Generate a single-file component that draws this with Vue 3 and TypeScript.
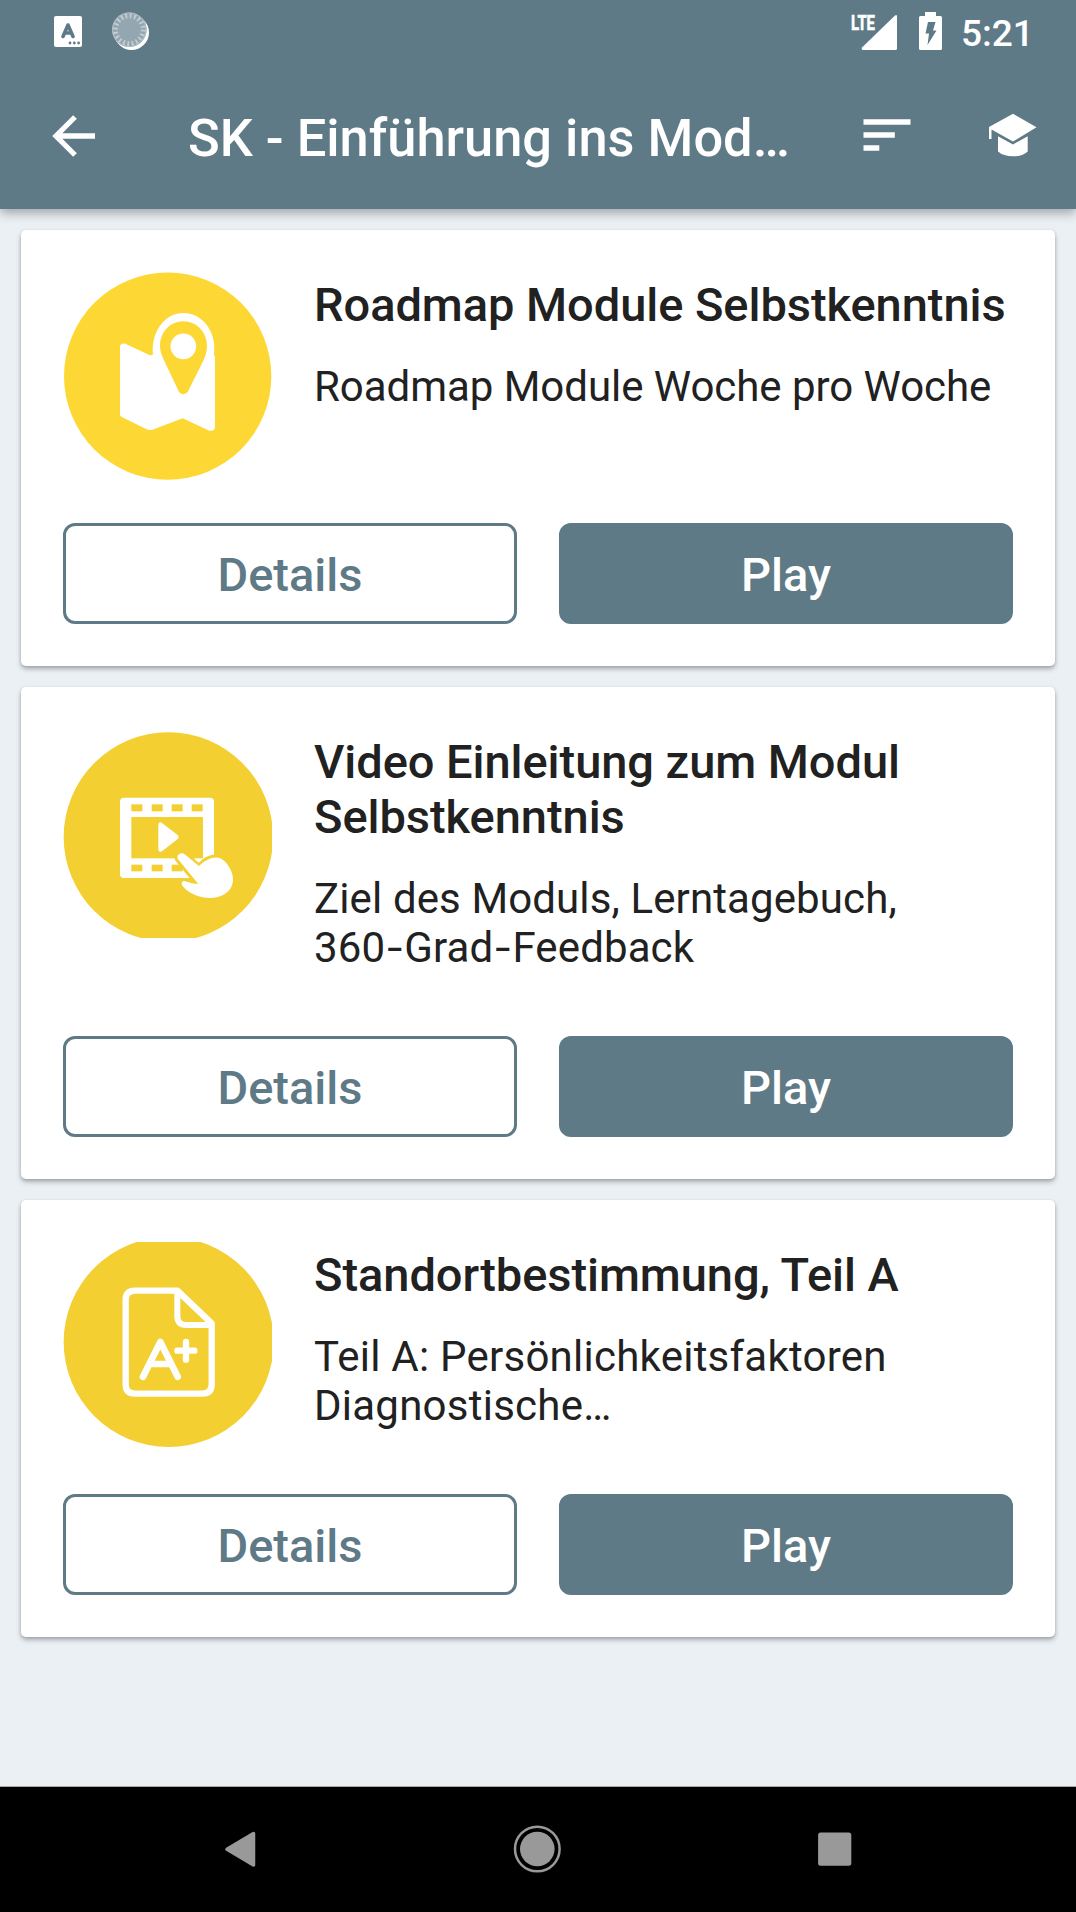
<script setup lang="ts">
type IconName = 'map' | 'video' | 'grade'

interface Module {
  icon: IconName
  title: string
  description: string[]
}

const modules: Module[] = [
  { icon: 'map', title: 'Roadmap Module Selbstkenntnis', description: ['Roadmap Module Woche pro Woche'] },
  {
    icon: 'video',
    title: 'Video Einleitung zum Modul Selbstkenntnis',
    description: ['Ziel des Moduls, Lerntagebuch,', '360-Grad-Feedback'],
  },
  {
    icon: 'grade',
    title: 'Standortbestimmung, Teil A',
    description: ['Teil A: Persönlichkeitsfaktoren', 'Diagnostische…'],
  },
]

// Keeps the hyphens as separate pieces so they can be set wider than the words.
const pieces = (line: string): string[] => line.split(/(-)/)
</script>

<template>
  <div class="screen">
    <header class="header">
      <div class="status">
        <svg class="status-left" viewBox="50 0 104 62" width="104" height="62">
          <rect x="54" y="16" width="28" height="31" rx="2" fill="#fff" />
          <path d="M63 36.500 68 25 73 36.500M65 33h6" fill="none" stroke="#5f7a87" stroke-width="3.600" stroke-linecap="round" stroke-linejoin="round" />
          <g fill="#5f7a87"><circle cx="70" cy="43" r="1.400" /><circle cx="74.300" cy="43" r="1.400" /><circle cx="78.600" cy="43" r="1.400" /></g>
          <circle cx="131.500" cy="32.500" r="17.500" fill="#fff" />
          <circle cx="129.300" cy="29.700" r="17.300" fill="#94a7b0" />
          <circle cx="129.300" cy="29.700" r="14" fill="none" stroke="#c3ced3" stroke-width="5" stroke-dasharray="1.800 2.600" />
          <circle cx="129.300" cy="29.700" r="16.800" fill="none" stroke="#b4c1c8" stroke-width="1" />
        </svg>
        <svg class="status-right" viewBox="848 0 98 62" width="98" height="62">
          <text class="lte" x="851" y="29.800" textLength="24" lengthAdjust="spacingAndGlyphs">LTE</text>
          <path d="M863 50h32.500q1.500 0 1.500-1.500V16.500q0-2.500-2-1L862 47.500q-1 2 1 2.500z" fill="#fff" />
          <path d="M925 12h11v4h4.500q1.500 0 1.500 1.500v31q0 1.500-1.500 1.500h-20q-1.500 0-1.500-1.500v-31q0-1.500 1.500-1.500H925z" fill="#fff" />
          <path d="M928 22h7.500l-2.500 8.500h3.500L927.500 45l1.500-11.500h-3.500z" fill="#5f7a87" />
        </svg>
        <span class="clock">5:21</span>
      </div>
      <div class="appbar">
        <svg class="back" viewBox="51 112 46 48" width="46" height="48">
          <path d="M95 136H56M75 117 56 136l19 19" fill="none" stroke="#fff" stroke-width="5.300" />
        </svg>
        <h1 class="heading">SK - Einführung ins Mod…</h1>
        <svg class="sort" viewBox="863.500 112 48 48" width="48" height="48">
          <path d="M864 119.200h47v5.600h-47zM864 132.200h31.300v5.600H864zM864 145.200h15.800v5.600H864z" fill="#fff" />
        </svg>
        <svg class="cap" viewBox="988 112 50 48" width="50" height="48">
          <path d="M1013 113.800 1036.500 127.300 1013 141.500 991.500 129.500V139H989V126.900z" fill="#fff" />
          <path d="M998 136.200l15 8.200 14.700-8.200V151.500q-5 4.800-14.700 4.800T998 151.500z" fill="#fff" />
        </svg>
      </div>
    </header>

    <main class="list">
      <article v-for="item in modules" :key="item.title" class="card" :class="`card-${item.icon}`">
        <div class="content">
          <svg v-if="item.icon === 'map'" class="picture" viewBox="189 156 627 627">
            <circle cx="503" cy="468.500" r="311" fill="#fdd835" />
            <path
              d="M360 382q0-15 16-11l72 34q8 2 11-2c-6-62 31-124 91-124 62 0 101 62 92 124q3 4 3 12V622q-2 13-17 10L548 595 457 629q-9 3-17-1L364 590q-4-2-4-8z"
              fill="#fff"
            />
            <path d="M550 304c41 0 71 34 71 74 0 16-4 29-10 42l-48 96q-13 14-26 0l-45-95c-6-13-12-26-12-43 0-40 29-74 70-74z" fill="#fdd835" />
            <circle cx="550" cy="379" r="38.500" fill="#fff" />
          </svg>
          <svg v-else-if="item.icon === 'video'" class="picture" viewBox="189 147 627 627">
            <circle cx="505" cy="471" r="314" fill="#f3cf31" />
            <rect x="360" y="353" width="282" height="241" rx="12" fill="#fff" />
            <g fill="#f3cf31">
              <rect x="394" y="373" width="33" height="21" /><rect x="455" y="373" width="33" height="21" />
              <rect x="515" y="373" width="33" height="21" /><rect x="575" y="373" width="33" height="21" />
              <rect x="394" y="411" width="215" height="124" />
              <rect x="394" y="554" width="33" height="20" /><rect x="455" y="554" width="33" height="20" />
              <rect x="515" y="554" width="33" height="20" />
            </g>
            <path d="M475 434q1-10 10-6l48 37q6 6 0 12l-46 36q-11 7-12-5z" fill="#fff" />
            <path
              d="M533 536c-4-12 11-21 21-13l43 35c32-31 63-34 82-9 28 35 27 73-5 93-30 19-86 16-121-18-9-9-10-15-5-20 5-4 20 7 47 8z"
              fill="#fff" stroke="#f3cf31" stroke-width="18" stroke-linejoin="round" paint-order="stroke"
            />
            <path d="M583 538h25l-12 10z" fill="#fff" />
          </svg>
          <svg v-else class="picture" viewBox="189 156 627 627">
            <circle cx="506" cy="456" r="315" fill="#f3cf31" />
            <g fill="none" stroke="#fff" stroke-linecap="round" stroke-linejoin="round">
              <path d="M405 302H532L635 400V583q0 28-28 28H405q-28 0-28-28V330q0-28 28-28z" stroke-width="19" />
              <path d="M532 304v74q0 27 27 27h74" stroke-width="18" />
              <path d="M429 560 481 456 533 560M454 522h54" stroke-width="20" />
              <path d="M558 456v53M532 482h51" stroke-width="19" />
            </g>
          </svg>
          <div class="texts">
            <h2 class="title">{{ item.title }}</h2>
            <p class="description">
              <span v-for="line in item.description" :key="line" class="line"><span
                v-for="(piece, i) in pieces(line)" :key="i" :class="{ hyphen: piece === '-' }">{{ piece }}</span></span>
            </p>
          </div>
        </div>
        <div class="actions">
          <button type="button" class="button outlined">Details</button>
          <button type="button" class="button filled">Play</button>
        </div>
      </article>
    </main>

    <nav class="navbar">
      <svg viewBox="225.500 1829 32 40" width="32" height="40">
        <path d="M254 1833.500v31.500L227.500 1849.300z" fill="#999" stroke="#999" stroke-width="3.500" stroke-linejoin="round" />
      </svg>
      <svg viewBox="513 1825 48 48" width="48" height="48">
        <circle cx="537.300" cy="1849" r="22.300" fill="none" stroke="#999" stroke-width="2.500" />
        <circle cx="537.300" cy="1849" r="17.300" fill="#999" />
      </svg>
      <svg viewBox="817.500 1829 35 40" width="35" height="40">
        <rect x="818.600" y="1832.600" width="33.200" height="33.200" rx="2.500" fill="#999" />
      </svg>
    </nav>
  </div>
</template>

<style>
body {
  margin: 0;
}
</style>

<style scoped>
.screen {
  width: 1076px;
  height: 1912px;
  display: flex;
  flex-direction: column;
  overflow: hidden;
  background: #ebf0f4;
  color: #212121;
  font-family: Roboto, sans-serif;
}
.header {
  height: 209px;
  flex: none;
  background: #5f7a87;
  color: #fff;
  box-shadow: 0 4px 10px rgba(40, 50, 60, 0.4);
}
.status {
  height: 62px;
  display: flex;
  padding-left: 50px;
}
.status-right {
  margin-left: 694px;
}
.lte {
  font: 700 21px Roboto, sans-serif;
  fill: #fff;
  stroke: #fff;
  stroke-width: 0.6px;
}
.clock {
  margin-left: 15px;
  font-size: 37px;
  font-weight: 500;
  line-height: 67px;
}
.appbar {
  height: 148px;
  display: flex;
  align-items: center;
  padding-left: 51px;
}
.back,
.sort,
.cap {
  flex: none;
}
.heading {
  width: 640px;
  margin: 0 0 0 91px;
  padding-top: 4px;
  font-size: 52.4px;
  font-weight: 500;
  line-height: 60px;
  white-space: nowrap;
}
.sort {
  margin-left: 35px;
}
.cap {
  margin-left: 77px;
}
.list {
  flex: 1;
  display: flex;
  flex-direction: column;
  gap: 21px;
  padding: 21px 21px 0;
}
.card {
  padding: 42px;
  background: #fff;
  border-radius: 5px;
  box-shadow: 0 3px 5px rgba(40, 50, 55, 0.33), 0 1px 3px rgba(40, 50, 55, 0.15);
}
.content {
  display: flex;
  gap: 42px;
}
.picture {
  width: 209px;
  height: 209px;
  flex: none;
}
.texts {
  flex: 1;
  padding: 5px 0 22.5px;
}
.title {
  margin: 0;
  font-size: 47px;
  font-weight: 500;
  line-height: 55px;
  letter-spacing: -0.05px;
}
.description {
  margin: 29.5px 0 0;
  font-size: 42px;
  line-height: 49px;
}
.card-map .description {
  letter-spacing: -0.04px;
}
.card-video .description {
  letter-spacing: 0.12px;
}
.card-grade .description {
  letter-spacing: 0.24px;
}
.line {
  display: block;
  white-space: nowrap;
}
.hyphen {
  display: inline-block;
  margin: 0 3.7px;
  transform: scaleX(1.3);
}
.actions {
  display: flex;
  gap: 42px;
  margin-top: 42px;
}
.button {
  flex: 1;
  height: 101px;
  padding: 2px 0 0;
  border: 3px solid #5f7a87;
  border-radius: 12px;
  font-family: inherit;
  font-size: 47px;
  font-weight: 500;
  line-height: 55px;
}
.outlined {
  background: #fff;
  color: #5f7a87;
}
.filled {
  background: #5f7a87;
  color: #fff;
}
.navbar {
  height: 124px;
  flex: none;
  display: flex;
  align-items: center;
  gap: 256px;
  padding-left: 225px;
  padding-bottom: 1px;
  border-top: 1px solid #aaa;
  background: #000;
}
</style>
